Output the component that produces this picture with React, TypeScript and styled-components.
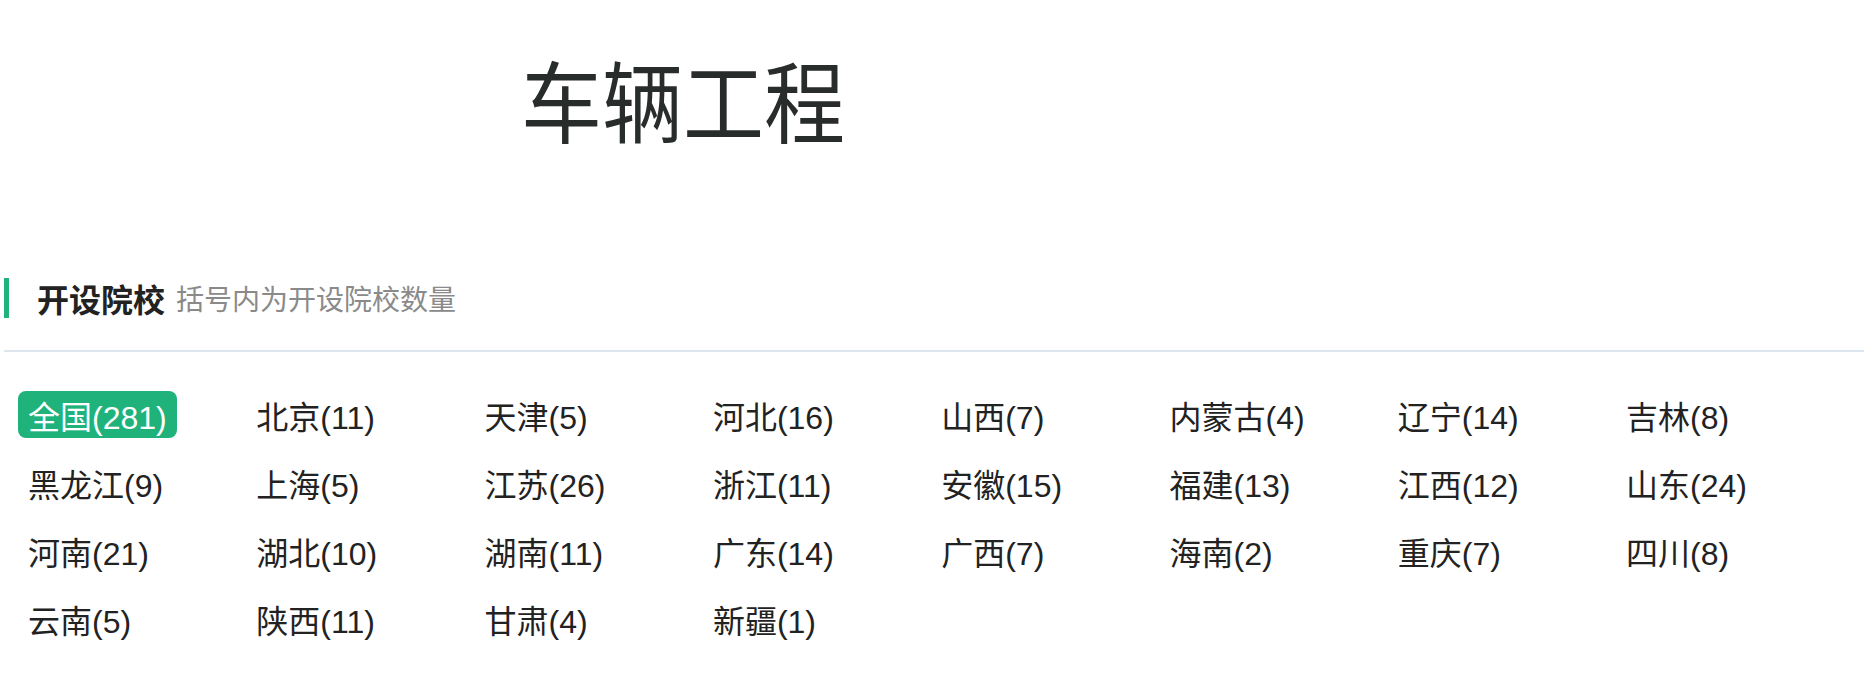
import { FC } from "react";
import styled, { createGlobalStyle } from "styled-components";

const GlobalStyle = createGlobalStyle`
  html, body {
    margin: 0;
    padding: 0;
    background: #fff;
  }
  body {
    font-family: "Liberation Sans", "Noto Sans CJK SC", sans-serif;
    color: #222;
  }
`

const Page = styled.div`
  width: 1864px;
  padding-left: 4px;
  box-sizing: border-box;
`

const Hero = styled.div`
  height: 278px;
  padding: 61px 0 0 517px;
  box-sizing: border-box;
`

const MajorTitle = styled.h1`
  margin: 0;
  font-size: 81px;
  line-height: 81px;
  font-weight: 400;
  color: #282c2a;
  transform: scaleY(1.1);
  transform-origin: top left;
`

const SectionHead = styled.div`
  padding-bottom: 32px;
  border-bottom: 2px solid #dde5ee;
`

const HeadLabel = styled.div`
  display: flex;
  align-items: center;
  gap: 11px;
  height: 40px;
  padding-left: 28px;
  border-left: 5px solid #20b27b;
`

const HeadTitle = styled.h3`
  margin: 0;
  font-size: 32px;
  font-weight: 700;
  color: #222;
`

const HeadNote = styled.span`
  font-size: 28px;
  color: #8a8a8a;
`

const ProvinceGrid = styled.ul`
  list-style: none;
  margin: 39px 0 0;
  padding: 0 0 0 14px;
  display: grid;
  grid-template-columns: repeat(8, 228.3px);
  row-gap: 21px;
`

const Province = styled.li<{ $active?: boolean }>`
  justify-self: start;
  height: 47px;
  padding: 0 10px;
  display: flex;
  align-items: center;
  font-size: 32px;
  border-radius: 8px;
  cursor: pointer;
  color: ${p => (p.$active ? "#fff" : "#222")};
  background: ${p => (p.$active ? "#20b27b" : "transparent")};
`

const provinces: [string, number][] = [
  ["全国", 281], ["北京", 11], ["天津", 5], ["河北", 16], ["山西", 7], ["内蒙古", 4], ["辽宁", 14], ["吉林", 8],
  ["黑龙江", 9], ["上海", 5], ["江苏", 26], ["浙江", 11], ["安徽", 15], ["福建", 13], ["江西", 12], ["山东", 24],
  ["河南", 21], ["湖北", 10], ["湖南", 11], ["广东", 14], ["广西", 7], ["海南", 2], ["重庆", 7], ["四川", 8],
  ["云南", 5], ["陕西", 11], ["甘肃", 4], ["新疆", 1],
]

const App: FC = () => {
  return (
    <>
      <GlobalStyle />
      <Page>
        <Hero>
          <MajorTitle>车辆工程</MajorTitle>
        </Hero>
        <SectionHead>
          <HeadLabel>
            <HeadTitle>开设院校</HeadTitle>
            <HeadNote>括号内为开设院校数量</HeadNote>
          </HeadLabel>
        </SectionHead>
        <ProvinceGrid>
          {provinces.map(([name, count], i) => (
            <Province key={name} $active={i === 0}>
              {name}({count})
            </Province>
          ))}
        </ProvinceGrid>
      </Page>
    </>
  );
}

export default App;
